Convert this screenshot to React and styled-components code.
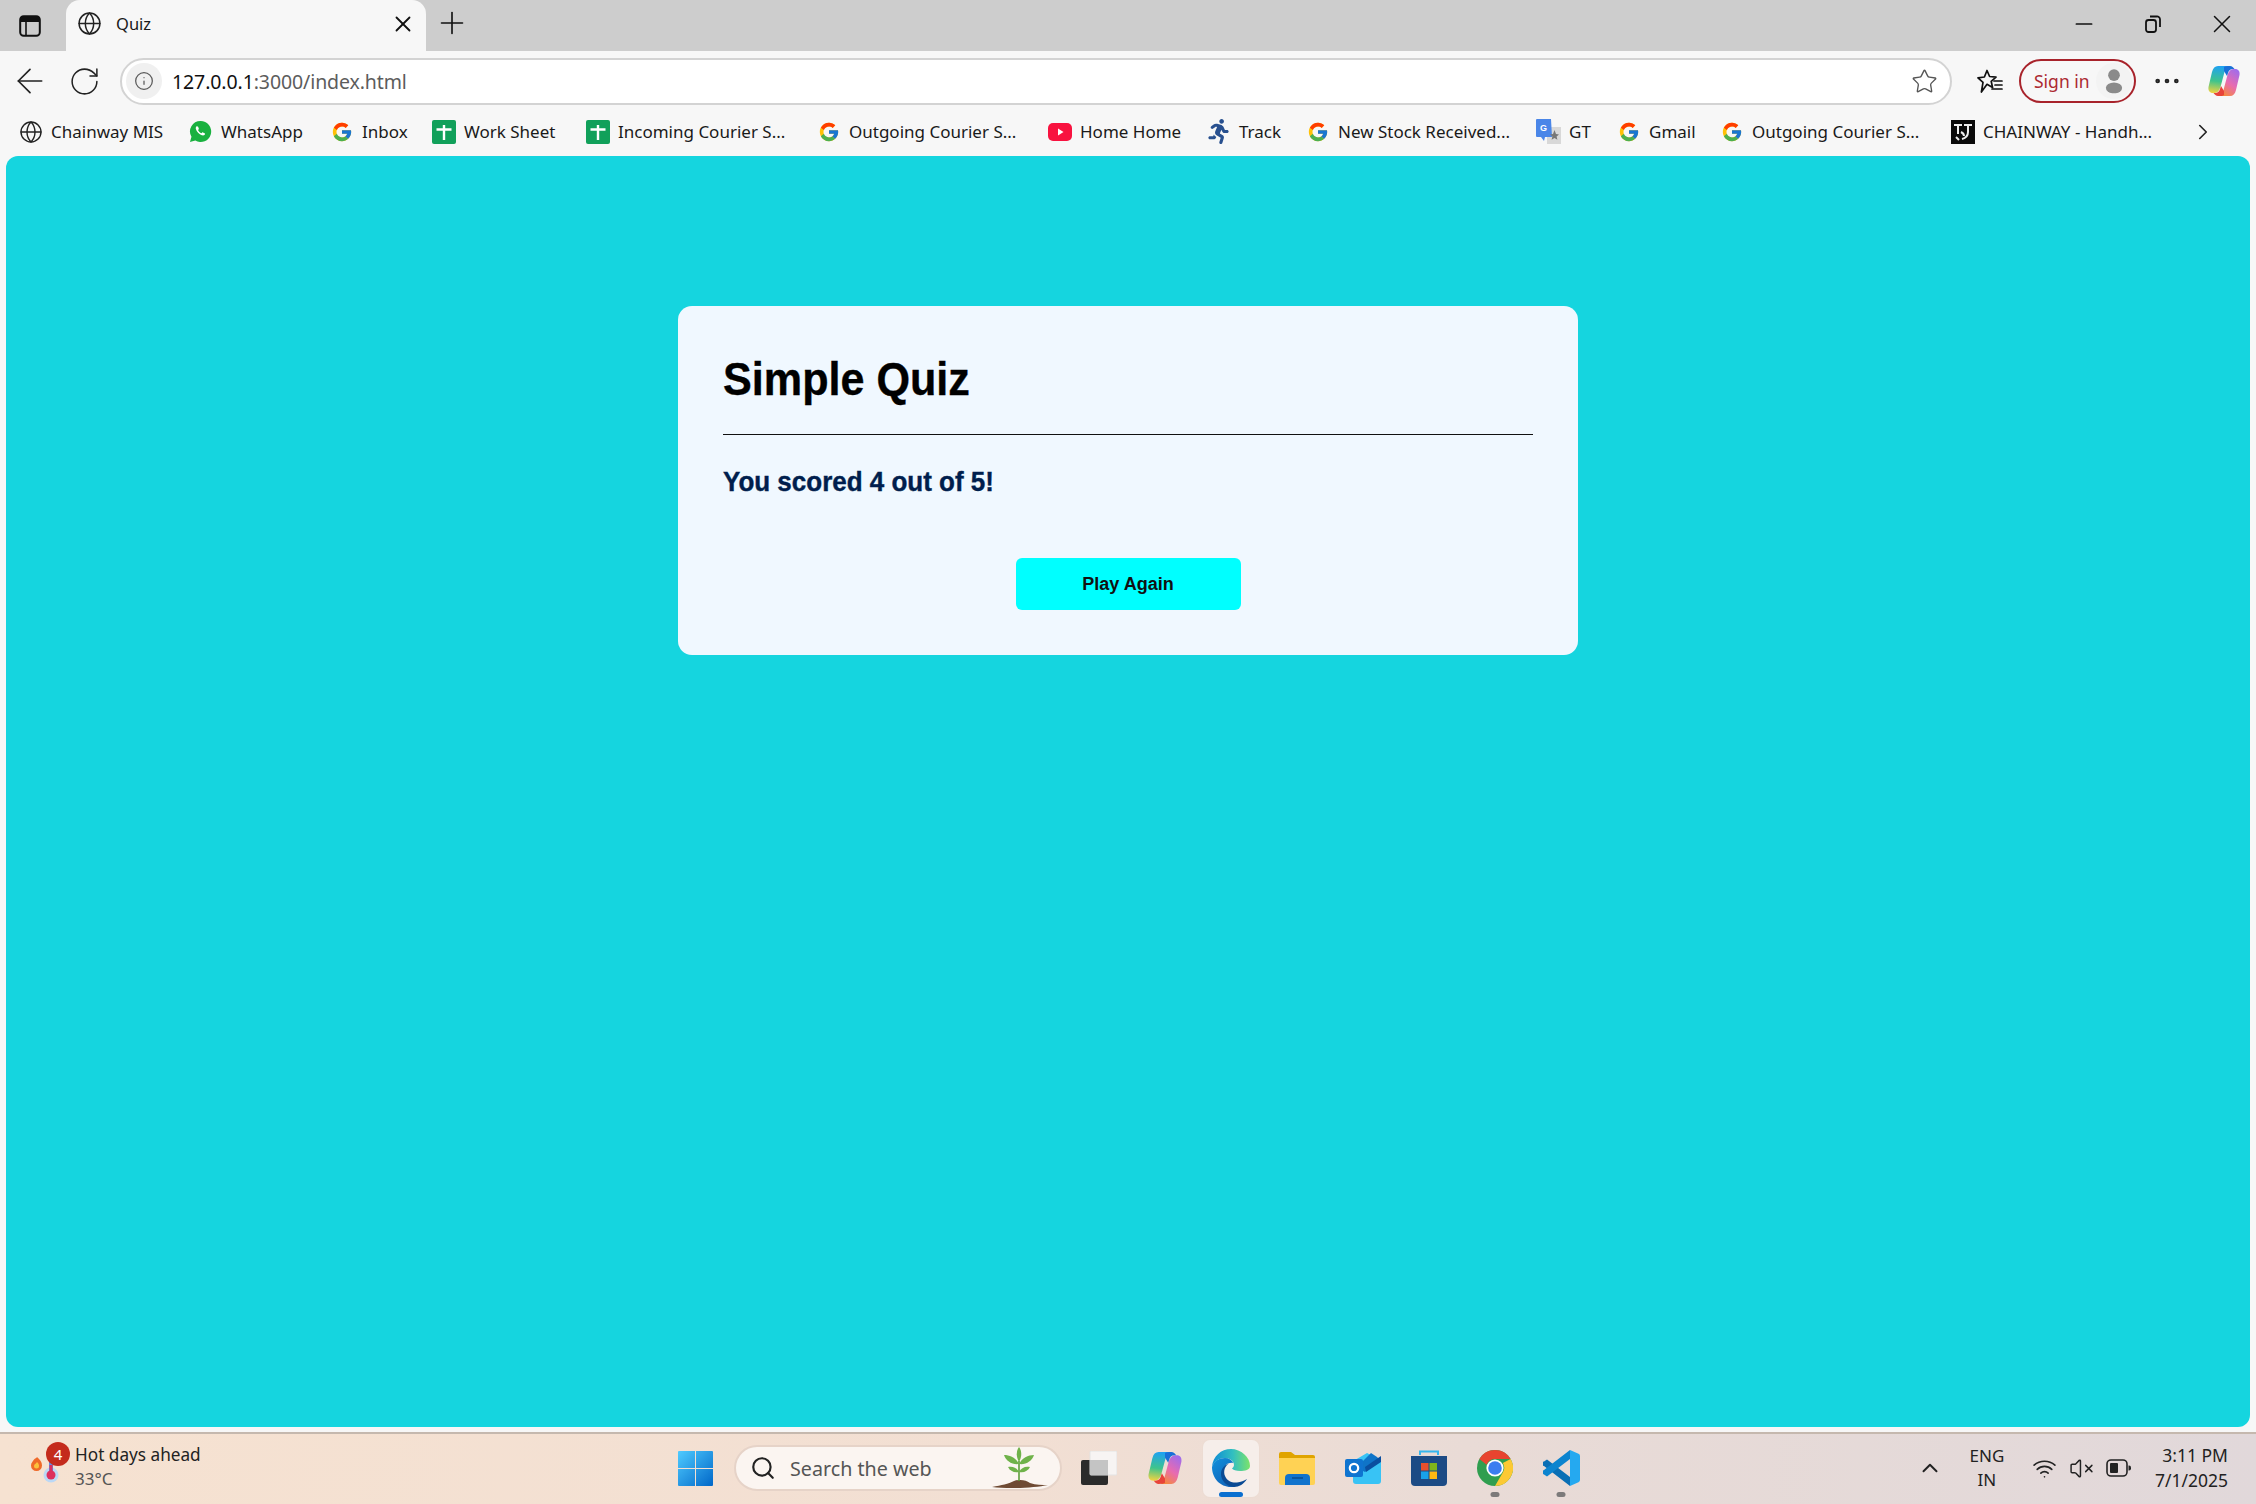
import styled, { createGlobalStyle } from "styled-components";
import { ArrowLeft, RotateCw, Info, Star, Plus, X, Minus, ChevronRight, ChevronUp, Search, Wifi, VolumeX, Globe, MoreHorizontal } from "lucide-react";
import { FcGoogle } from "react-icons/fc";
import { FaRunning } from "react-icons/fa";

const GlobalStyle = createGlobalStyle`
  html, body { margin: 0; padding: 0; overflow: hidden; }
  body { font-family: "Noto Sans", "Open Sans", sans-serif; }
  * { box-sizing: border-box; }
`;

const Screen = styled.div`
  width: 2256px;
  height: 1504px;
  display: flex;
  flex-direction: column;
  background: #f7f7f7;
`;

/* tab strip */
const TabStrip = styled.div`
  height: 51px;
  flex: none;
  background: #cdcdcd;
  display: flex;
  align-items: stretch;
  padding-left: 19px;
`;
const PanelBtn = styled.div`
  width: 47px;
  display: flex;
  align-items: center;
`;
const Tab = styled.div`
  width: 360px;
  background: #f7f7f7;
  border-radius: 14px 14px 0 0;
  display: flex;
  align-items: center;
  padding: 0 10px 4px 11px;
  gap: 14px;
  color: #1a1a1a;
`;
const TabTitle = styled.span`
  flex: 1;
  font-size: 16.5px;
`;
const NewTab = styled.div`
  width: 52px;
  display: flex;
  align-items: center;
  justify-content: center;
  padding-bottom: 5px;
`;
const WinControls = styled.div`
  margin-left: auto;
  display: flex;
`;
const WinBtn = styled.div`
  width: 69px;
  display: flex;
  align-items: center;
  justify-content: center;
  padding-bottom: 3px;
`;

/* address bar */
const Toolbar = styled.div`
  height: 62px;
  flex: none;
  display: flex;
  align-items: center;
  padding: 0 0 2px 10px;
`;
const NavBtn = styled.div`
  width: ${(p) => p.$w}px;
  flex: none;
  display: flex;
  align-items: center;
`;
const UrlPill = styled.div`
  width: 1832px;
  flex: none;
  height: 47px;
  margin-left: -3px;
  background: #fff;
  border: 2px solid #d3d3d3;
  border-radius: 24px;
  display: flex;
  align-items: center;
  padding: 0 12px 0 4px;
`;
const InfoBubble = styled.div`
  width: 36px;
  height: 36px;
  border-radius: 50%;
  background: #f0f0f0;
  display: flex;
  align-items: center;
  justify-content: center;
  color: #5a5a5a;
`;
const Url = styled.div`
  flex: 1;
  margin-left: 10px;
  font-size: 19.5px;
  letter-spacing: -0.1px;
  color: #5c5c5c;
  b { font-weight: 400; color: #111; }
`;
const ToolbarRight = styled.div`
  display: flex;
  align-items: center;
  margin-left: 25px;
`;
const SignIn = styled.div`
  width: 117px;
  height: 44px;
  margin-left: 16px;
  border: 2px solid #a8232b;
  border-radius: 22px;
  display: flex;
  align-items: center;
  justify-content: space-between;
  padding: 0 2px 0 13px;
  color: #ac2a31;
  font-size: 17.5px;
`;
const Avatar = styled.div`
  width: 36px;
  height: 36px;
  border-radius: 50%;
  background: #f3f3f3;
  display: flex;
  align-items: center;
  justify-content: center;
`;
const Dots = styled.div`
  margin: 0 24px 0 15px;
  display: flex;
  color: #222;
`;

/* bookmarks */
const BookmarksBar = styled.div`
  height: 43px;
  flex: none;
  display: flex;
  align-items: center;
  padding: 0 0 6px 18px;
  gap: 27px;
`;
const Bookmark = styled.div`
  display: flex;
  align-items: center;
  gap: 8px;
  color: #1a1a1a;
  font-size: 17px;
  white-space: nowrap;
`;
const BookmarkLabel = styled.span`
  width: ${(p) => p.$w}px;
`;
const BookmarkIcon = styled.div`
  width: 25px;
  height: 25px;
  display: flex;
  align-items: center;
  justify-content: center;
  flex: none;
`;
const More = styled.div`
  margin-left: 6px;
  display: flex;
`;

/* page */
const Content = styled.main`
  height: 1271px;
  flex: none;
  margin: 0 6px;
  background: #15d5df;
  border-radius: 12px;
  padding-top: 150px;
`;
const Card = styled.section`
  width: 900px;
  height: 349px;
  margin: 0 auto;
  background: #f0f8ff;
  border-radius: 14px;
  padding: 46px 45px 45px;
  font-family: "Liberation Sans", Arial, sans-serif;
  font-weight: 700;
`;
const Title = styled.h1`
  margin: 0;
  padding-bottom: 28px;
  border-bottom: 1px solid #111;
  font-size: 47px;
  line-height: 54px;
  color: #000;
`;
const Narrow = styled.span`
  display: inline-block;
  transform: scaleX(${(p) => p.$x});
  transform-origin: left center;
  -webkit-text-stroke: 0.4px currentColor;
`;
const Score = styled.p`
  margin: 30px 0 0;
  font-size: 28px;
  line-height: 34px;
  color: #001e4d;
`;
const PlayAgain = styled.button`
  display: block;
  width: 225px;
  height: 52px;
  margin: 59px auto 0;
  border: none;
  border-radius: 6px;
  background: #00ffff;
  color: #111;
  font: inherit;
  font-size: 18px;
`;

/* taskbar */
const Taskbar = styled.footer`
  margin-top: 5px;
  flex: 1;
  display: flex;
  align-items: center;
  padding-bottom: 2px;
  border-top: 2px solid #c5b8ae;
  background: linear-gradient(90deg, #f6e2d1 0%, #f2dfd3 45%, #e9dbd6 65%, #e1d8da 100%);
`;
const Weather = styled.div`
  width: 662px;
  flex: none;
  display: flex;
  align-items: center;
  padding: 0 0 2px 30px;
  gap: 5px;
`;
const WeatherIcon = styled.div`
  position: relative;
  width: 40px;
  height: 44px;
`;
const Badge = styled.span`
  position: absolute;
  left: 16px;
  top: -3px;
  width: 24px;
  height: 24px;
  border-radius: 50%;
  background: #c42b1c;
  color: #fff;
  font-size: 15px;
  line-height: 24px;
  text-align: center;
`;
const WeatherText = styled.div`
  font-size: 17.2px;
  line-height: 24px;
  color: #222;
  small { display: block; font-size: 17px; color: #555; }
`;
const Dock = styled.div`
  display: flex;
  align-items: center;
`;
const DockSlot = styled.div`
  position: relative;
  width: 66px;
  height: 57px;
  display: flex;
  align-items: center;
  justify-content: center;
  border-radius: 7px;
  background: ${(p) => (p.$active ? "#f6eeea" : "transparent")};
  box-shadow: ${(p) => (p.$active ? "0 0 0 1px #ecdcd3" : "none")};
  ${(p) => p.$active && "width: 56px; margin: 0 5px;"}
`;
const RunDot = styled.span`
  position: absolute;
  bottom: 0;
  left: 50%;
  transform: translateX(-50%);
  width: ${(p) => (p.$on ? 24 : 9)}px;
  height: 5px;
  border-radius: 3px;
  background: ${(p) => (p.$on ? "#0a6fd0" : "#7c7a7a")};
`;
const SearchBox = styled.div`
  width: 328px;
  height: 46px;
  margin: 0 4px 0 6px;
  background: #fbf5f1;
  border: 2px solid #e6d3c8;
  border-radius: 23px;
  display: flex;
  align-items: center;
  padding: 0 12px 0 14px;
  color: #555;
  font-size: 19.7px;
  gap: 14px;
  span { flex: 1; }
`;
const Tray = styled.div`
  margin-left: auto;
  padding-right: 28px;
  display: flex;
  align-items: center;
  color: #222;
`;
const Lang = styled.div`
  width: 60px;
  margin: 0 15px 0 14px;
  text-align: center;
  font-size: 17px;
  line-height: 24px;
`;
const TrayIcons = styled.div`
  display: flex;
  align-items: center;
  gap: 12px;
`;
const Clock = styled.div`
  margin-left: 24px;
  text-align: right;
  font-size: 17.5px;
  line-height: 25px;
`;

/* drawn icons */
const PanelIcon = () => (
  <svg width="22" height="22" viewBox="0 0 22 22" fill="none">
    <rect x="1.2" y="1.2" width="19.6" height="19.6" rx="3.5" stroke="#111" strokeWidth="2" />
    <path d="M1 7V4.5A3.5 3.5 0 0 1 4.5 1h13A3.5 3.5 0 0 1 21 4.5V7z" fill="#111" />
    <path d="M7 7v13" stroke="#111" strokeWidth="1.6" />
  </svg>
);
const RestoreIcon = () => (
  <svg width="16" height="18" viewBox="0 0 16 18" fill="none" stroke="#111" strokeWidth="1.8">
    <rect x="1" y="5" width="10" height="12" rx="2.5" />
    <path d="M5 1.5h6.5A3 3 0 0 1 15 4.5V12" />
  </svg>
);
const FavIcon = () => (
  <svg width="26" height="26" viewBox="0 0 26 26" fill="none" stroke="#111" strokeWidth="1.7" strokeLinejoin="round">
    <path d="M10 2.5l2.6 6 6.4.6-4.8 4.2 1.4 6.3L10 16.3 4.4 24 6 14.4 1 9.9l6.4-.9z" />
    <path d="M17 13h8M18 17h7M15 21h10" strokeLinecap="round" />
  </svg>
);
const PersonIcon = () => (
  <svg width="18" height="27" viewBox="0 0 20 30" fill="#8a8a8a">
    <circle cx="10" cy="8" r="6.5" />
    <path d="M1 22a9 6 0 0 1 18 0 7 6 0 0 1-7 6H8a7 6 0 0 1-7-6z" />
  </svg>
);
const CopilotIcon = ({ size = 34, id = "a" }) => (
  <svg width={size} height={size} viewBox="0 0 34 34">
    <defs>
      <linearGradient id={`cpA${id}`} x1="0.3" y1="0" x2="0.2" y2="1">
        <stop offset="0" stopColor="#1fa2f0" />
        <stop offset="0.55" stopColor="#3fc48c" />
        <stop offset="1" stopColor="#f5d33f" />
      </linearGradient>
      <linearGradient id={`cpB${id}`} x1="0.9" y1="0" x2="0.3" y2="1">
        <stop offset="0" stopColor="#9a6cf0" />
        <stop offset="0.55" stopColor="#e86bb0" />
        <stop offset="1" stopColor="#f58a3c" />
      </linearGradient>
    </defs>
    <path d="M11 2h12c-3 0-4.5 2-5.500 6l-4 15c-1 3-3 6-6 6H6c-3.500 0-5-2.500-4.500-6L5 8c1-4 3-6 6-6z" fill={`url(#cpA${id})`} />
    <path d="M23 32H11c3 0 4.500-2 5.500-6l4-15c1-3 3-6 6-6H28c3.500 0 5 2.500 4.500 6L29 26c-1 4-3 6-6 6z" fill={`url(#cpB${id})`} />
    <path d="M17 3c1-1 3-1 6-1 2 0 3.500 1.500 4.500 3H26c-3 0-4.500 2-5 4l-1 3-3-5z" fill="#1a6fd8" />
    <path d="M17 31c-1 1-3 1-6 1-2 0-3.500-1.500-4.500-3H8c3 0 4.500-2 5-4l1-3 3 5z" fill="#e8443a" />
  </svg>
);
const WhatsAppIcon = () => (
  <svg width="23" height="23" viewBox="0 0 24 24">
    <path d="M12 1a11 11 0 0 0-9.400 16.600L1 23l5.600-1.500A11 11 0 1 0 12 1z" fill="#19b13f" />
    <path d="M8 6.500c-.8.6-1.200 1.600-.8 3 .7 2.700 3.400 5.600 6.200 6.500 1.400.4 2.500 0 3.200-1 .3-.5.1-1-.3-1.200l-1.700-.8c-.4-.2-.7-.1-1 .2l-.6.7c-1.600-.7-2.900-2-3.600-3.500l.6-.6c.3-.3.3-.6.2-1l-.7-1.700c-.2-.5-.8-.7-1.500-.6z" fill="#fff" />
  </svg>
);
const SheetIcon = () => (
  <svg width="24" height="24" viewBox="0 0 24 24">
    <rect width="24" height="24" rx="2" fill="#11a05a" />
    <path d="M4.500 9.500h15M12 5v15" stroke="#fff" strokeWidth="2.400" />
  </svg>
);
const YoutubeIcon = () => (
  <svg width="24" height="18" viewBox="0 0 24 18">
    <rect width="24" height="18" rx="5" fill="#f8123f" />
    <path d="M10 5.500l5.500 3.500-5.500 3.500z" fill="#fff" />
  </svg>
);
const TranslateIcon = () => (
  <svg width="25" height="26" viewBox="0 0 25 26">
    <rect x="11" y="8" width="14" height="17" fill="#d8d8d8" />
    <path d="M1 0h14l1 18H9l-1 4-3-4H1a1 1 0 0 1-1-1V1a1 1 0 0 1 1-1z" fill="#4a86e8" />
    <text x="4" y="12" fontSize="9" fontWeight="700" fill="#fff" fontFamily="Liberation Sans">G</text>
    <path d="M18.500 11l1.500 4 3 .4-2.400 2 .8 3.400-2.900-1.800-2.900 1.800.8-3.400-2.400-2 3-.4z" fill="#777" />
  </svg>
);
const ChainwayIcon = () => (
  <svg width="24" height="24" viewBox="0 0 24 24">
    <rect width="24" height="24" fill="#0a0a0a" />
    <path d="M3 5h8M7 5v9M13 5h8M17 5v7c0 4-2 6-6 7M10 12c2 1 3 2 3 4M5 17l3 3" stroke="#eee" strokeWidth="2" fill="none" />
  </svg>
);
const WinLogo = () => (
  <svg width="35" height="35" viewBox="0 0 35 35">
    <defs>
      <linearGradient id="wl" x1="0" y1="0" x2="1" y2="1">
        <stop offset="0" stopColor="#4fcbff" />
        <stop offset="1" stopColor="#0067c8" />
      </linearGradient>
    </defs>
    <path d="M0 1a1 1 0 0 1 1-1h16v17H0zM18 0h16a1 1 0 0 1 1 1v16H18zM0 18h17v17H1a1 1 0 0 1-1-1zM18 18h17v16a1 1 0 0 1-1 1H18z" fill="url(#wl)" />
  </svg>
);
const Plant = () => (
  <svg width="56" height="42" viewBox="0 0 56 42">
    <path d="M0 40c10-2 16-3 22-6 6-2 12-1 16 2 6 2 12 2 18 2-14 3-40 4-56 2z" fill="#6f4a33" />
    <path d="M27 34V14" stroke="#5d9e3a" strokeWidth="1.6" />
    <g fill="#6fb24a">
      <path d="M27 0c3 4 3 10 0 15-3-5-3-11 0-15z" />
      <path d="M12 8c6 0 12 3 15 9-7 1-13-3-15-9z" />
      <path d="M42 8c-6 0-12 3-15 9 7 1 13-3 15-9z" />
      <path d="M16 20c5-1 9 1 11 5-5 1-9-1-11-5z" />
      <path d="M38 20c-5-1-9 1-11 5 5 1 9-1 11-5z" />
    </g>
  </svg>
);
const TaskView = () => (
  <svg width="36" height="34" viewBox="0 0 36 34">
    <rect x="0" y="9" width="27" height="25" rx="2" fill="#2b2b2b" />
    <rect x="9" y="0" width="27" height="24" rx="1" fill="#f8f8f8" fillOpacity="0.85" stroke="#e3e3e3" />
    <rect x="9" y="9" width="18" height="15" fill="#c4c4c4" />
  </svg>
);
const EdgeIcon = () => (
  <svg width="38" height="38" viewBox="0 0 38 38">
    <defs>
      <linearGradient id="eg1" x1="0" y1="0.4" x2="1" y2="0.4">
        <stop offset="0" stopColor="#0d8bd6" />
        <stop offset="0.55" stopColor="#32bfc0" />
        <stop offset="1" stopColor="#7ce36a" />
      </linearGradient>
      <linearGradient id="eg2" x1="0" y1="0" x2="0.7" y2="1">
        <stop offset="0" stopColor="#1290dc" />
        <stop offset="1" stopColor="#0f62b8" />
      </linearGradient>
    </defs>
    <path d="M19 0C29 0 38 8 38 17C38 21 33 22 28 22C24 22 21 21 20 19.500C21 18.500 22 17.500 22 16C22 12 18 9 13 9C6 9 2 13 0 18C1 7 9 0 19 0Z" fill="url(#eg1)" />
    <path d="M0 18C2 12 7 9 13 9C17 9 20 11 21.500 14C15 13 10 18 11 25C12 31 17 36 24 37.500C22 38 21 38 19 38C8 38 0 29 0 18Z" fill="url(#eg2)" />
    <path d="M17 14.500C13 17 11 22 13 27C15 32 20 34 25 33.500C29 33 32 32 35 30C32 35 27 38 22 38C15 37.500 9 32 9 25C9 20 12 16 17 14.500Z" fill="#0a4a94" />
  </svg>
);
const FolderIcon = () => (
  <svg width="36" height="33" viewBox="0 0 36 33">
    <path d="M0 2a2 2 0 0 1 2-2h10l4 3h18a2 2 0 0 1 2 2v6H0z" fill="#e0a400" />
    <path d="M0 6h36v25a2 2 0 0 1-2 2H2a2 2 0 0 1-2-2z" fill="#ffd254" />
    <path d="M6 33v-7a4 4 0 0 1 4-4h17a4 4 0 0 1 4 4v7z" fill="#1173cd" />
    <path d="M13 26h11" stroke="#0a4f94" strokeWidth="1.6" />
  </svg>
);
const OutlookIcon = () => (
  <svg width="36" height="31" viewBox="0 0 36 31">
    <path d="M10 7l12-7 12 6a2 2 0 0 1 2 2v20a3 3 0 0 1-3 3H11a3 3 0 0 1-3-3v-5z" fill="#38c3f5" />
    <path d="M18 8l8-8 6 4 4 4-16 11-6-3z" fill="#0f74c8" />
    <path d="M20 14L36 3v6L21 19z" fill="#0a4fa0" />
    <rect x="0" y="6" width="18" height="18" rx="2" fill="#0f74d0" />
    <circle cx="9" cy="15" r="4.200" fill="none" stroke="#fff" strokeWidth="2.200" />
  </svg>
);
const StoreIcon = () => (
  <svg width="36" height="36" viewBox="0 0 36 36">
    <path d="M9 5V1.500h18V5" fill="none" stroke="#35b6ee" strokeWidth="2" />
    <path d="M0 6h36v26a4 4 0 0 1-4 4H4a4 4 0 0 1-4-4z" fill="#1c4b85" />
    <rect x="10" y="13" width="7.500" height="7.500" fill="#e9502c" />
    <rect x="18.500" y="13" width="7.500" height="7.500" fill="#80b51b" />
    <rect x="10" y="21.500" width="7.500" height="7.500" fill="#19a2ea" />
    <rect x="18.500" y="21.500" width="7.500" height="7.500" fill="#fdb813" />
  </svg>
);
const ChromeIcon = () => (
  <svg width="36" height="36" viewBox="0 0 36 36">
    <circle cx="18" cy="18" r="18" fill="#2f9e4f" />
    <path d="M18 0a18 18 0 0 1 15.600 9H18a9 9 0 0 0-8.400 5.700L2.400 9A18 18 0 0 1 18 0z" fill="#e8442f" />
    <path d="M33.600 9A18 18 0 0 1 18 36l7.800-13.500A9 9 0 0 0 25.800 13z" fill="#fcc934" />
    <circle cx="18" cy="18" r="8.600" fill="#fff" />
    <circle cx="18" cy="18" r="6.800" fill="#3b7df0" />
  </svg>
);
const VscodeIcon = () => (
  <svg width="37" height="36" viewBox="0 0 37 36">
    <path d="M1 11.500L4 9.500 27 27v9L1 16a2 2 0 0 1 0-4.500z" fill="#0a6fb5" />
    <path d="M1 24.500l3 2L27 9V0L1 20a2.500 2.500 0 0 0 0 4.500z" fill="#0c84cf" />
    <path d="M27 0l8.500 3.800A2.500 2.500 0 0 1 37 6v24a2.500 2.500 0 0 1-1.500 2.200L27 36z" fill="#25a9f0" />
  </svg>
);
const Thermo = () => (
  <svg width="40" height="44" viewBox="0 0 40 44">
    <path d="M7 12c3 3 5 5 5 8.500a5.500 5.500 0 0 1-11 0c0-3 2-4 3-6 1-1 2.500-1.500 3-2.500z" fill="#ef6a2a" />
    <path d="M7 17c2 2 2 3 2 4a2.500 2.500 0 0 1-5 0c0-2 2-2 3-4z" fill="#fbc13c" />
    <circle cx="21" cy="30" r="7.500" fill="#bcd8f5" />
    <rect x="19" y="12" width="4" height="17" fill="#5b8fe8" />
    <rect x="19.500" y="20" width="3" height="9" fill="#dd2f5c" />
    <circle cx="21" cy="30" r="4.500" fill="#dd2f5c" />
  </svg>
);
const BatteryIcon = () => (
  <svg width="25" height="18" viewBox="0 0 25 18" fill="none">
    <rect x="1" y="1" width="20" height="16" rx="4" stroke="#222" strokeWidth="1.600" />
    <rect x="4" y="4" width="8" height="10" rx="1" fill="#222" />
    <path d="M22.500 6.500h.5a2 2 0 0 1 2 2v1a2 2 0 0 1-2 2h-.5z" fill="#222" />
  </svg>
);

const bookmarks = [
  { label: "Chainway MIS", w: 110, icon: <Globe size={24} strokeWidth={1.4} color="#222" /> },
  { label: "WhatsApp", w: 81, icon: <WhatsAppIcon /> },
  { label: "Inbox", w: 42, icon: <FcGoogle size={22} /> },
  { label: "Work Sheet", w: 94, icon: <SheetIcon /> },
  { label: "Incoming Courier S...", w: 171, icon: <SheetIcon /> },
  { label: "Outgoing Courier S...", w: 171, icon: <FcGoogle size={22} /> },
  { label: "Home Home", w: 99, icon: <YoutubeIcon /> },
  { label: "Track", w: 39, icon: <FaRunning size={25} color="#28508f" /> },
  { label: "New Stock Received...", w: 171, icon: <FcGoogle size={22} /> },
  { label: "GT", w: 20, icon: <TranslateIcon /> },
  { label: "Gmail", w: 43, icon: <FcGoogle size={22} /> },
  { label: "Outgoing Courier S...", w: 171, icon: <FcGoogle size={22} /> },
  { label: "CHAINWAY - Handh...", w: 174, icon: <ChainwayIcon /> },
];

const dockApps = [
  { id: "taskview", icon: <TaskView /> },
  { id: "copilot", icon: <CopilotIcon size={36} id="b" /> },
  { id: "edge", icon: <EdgeIcon />, active: true },
  { id: "files", icon: <FolderIcon /> },
  { id: "outlook", icon: <OutlookIcon /> },
  { id: "store", icon: <StoreIcon /> },
  { id: "chrome", icon: <ChromeIcon />, running: true },
  { id: "vscode", icon: <VscodeIcon />, running: true },
];

const App = () => {
  return (
    <Screen>
      <GlobalStyle />
      <TabStrip>
        <PanelBtn><PanelIcon /></PanelBtn>
        <Tab>
          <Globe size={25} strokeWidth={1.4} color="#222" />
          <TabTitle>Quiz</TabTitle>
          <X size={26} strokeWidth={1.7} color="#111" />
        </Tab>
        <NewTab><Plus size={36} strokeWidth={1.1} color="#111" /></NewTab>
        <WinControls>
          <WinBtn><Minus size={26} strokeWidth={1.6} color="#111" /></WinBtn>
          <WinBtn><RestoreIcon /></WinBtn>
          <WinBtn><X size={30} strokeWidth={1.2} color="#111" /></WinBtn>
        </WinControls>
      </TabStrip>

      <Toolbar>
        <NavBtn $w={58}><ArrowLeft size={40} strokeWidth={1} color="#222" /></NavBtn>
        <NavBtn $w={55}><RotateCw size={33} strokeWidth={1.1} color="#222" /></NavBtn>
        <UrlPill>
          <InfoBubble><Info size={20} strokeWidth={1.5} /></InfoBubble>
          <Url><b>127.0.0.1</b>:3000/index.html</Url>
          <Star size={27} strokeWidth={1.2} color="#555" />
        </UrlPill>
        <ToolbarRight>
          <FavIcon />
          <SignIn>
            Sign in
            <Avatar><PersonIcon /></Avatar>
          </SignIn>
          <Dots><MoreHorizontal size={32} strokeWidth={1.5} /></Dots>
          <CopilotIcon />
        </ToolbarRight>
      </Toolbar>

      <BookmarksBar>
        {bookmarks.map((b, i) => (
          <Bookmark key={i}>
            <BookmarkIcon>{b.icon}</BookmarkIcon>
            <BookmarkLabel $w={b.w}>{b.label}</BookmarkLabel>
          </Bookmark>
        ))}
        <More><ChevronRight size={26} strokeWidth={1.5} color="#222" /></More>
      </BookmarksBar>

      <Content>
        <Card>
          <Title><Narrow $x={0.918}>Simple Quiz</Narrow></Title>
          <Score><Narrow $x={0.928}>You scored 4 out of 5!</Narrow></Score>
          <PlayAgain>Play Again</PlayAgain>
        </Card>
      </Content>

      <Taskbar>
        <Weather>
          <WeatherIcon>
            <Thermo />
            <Badge>4</Badge>
          </WeatherIcon>
          <WeatherText>
            Hot days ahead
            <small>33°C</small>
          </WeatherText>
        </Weather>
        <Dock>
          <DockSlot><WinLogo /></DockSlot>
          <SearchBox>
            <Search size={26} strokeWidth={2} color="#222" />
            <span>Search the web</span>
            <Plant />
          </SearchBox>
          {dockApps.map((a) => (
            <DockSlot key={a.id} $active={a.active}>
              {a.icon}
              {a.active && <RunDot $on />}
              {a.running && <RunDot />}
            </DockSlot>
          ))}
        </Dock>
        <Tray>
          <ChevronUp size={26} strokeWidth={1.8} />
          <Lang>ENG<br />IN</Lang>
          <TrayIcons>
            <Wifi size={25} strokeWidth={1.6} />
            <VolumeX size={25} strokeWidth={1.4} />
            <BatteryIcon />
          </TrayIcons>
          <Clock>3:11 PM<br />7/1/2025</Clock>
        </Tray>
      </Taskbar>
    </Screen>
  );
};

export default App;
